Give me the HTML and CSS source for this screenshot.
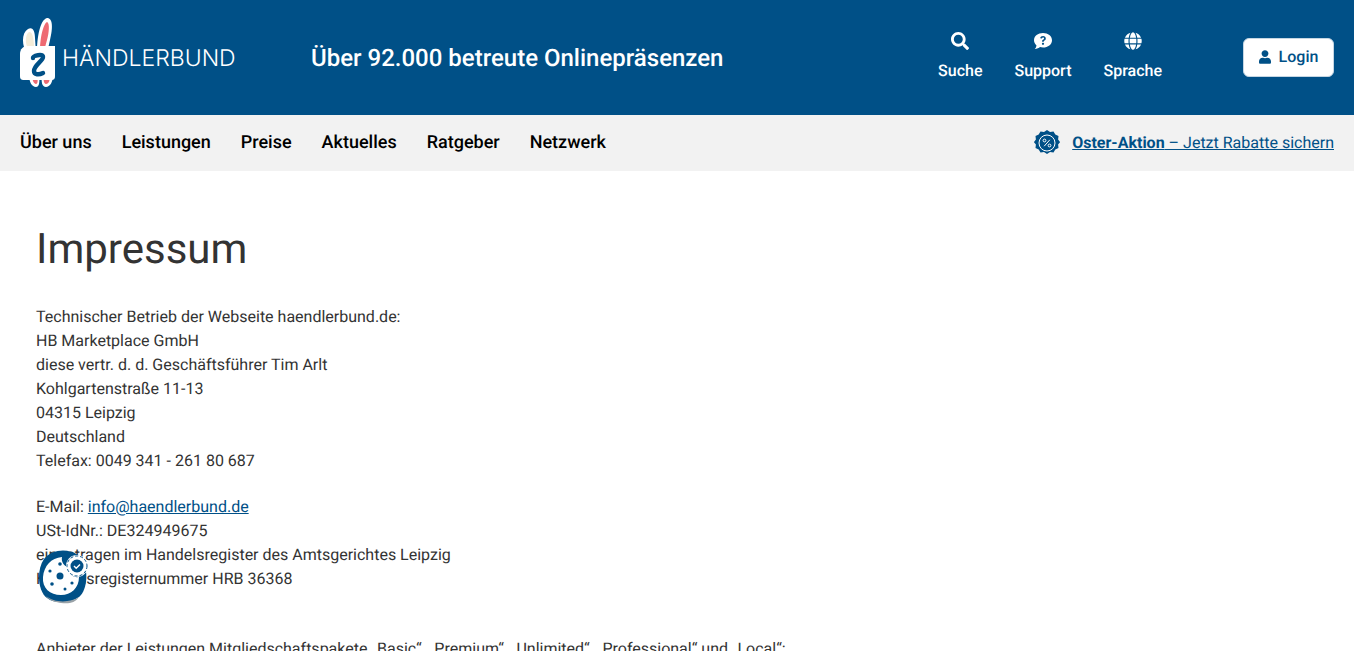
FILE: index.html
```html
<!DOCTYPE html>
<html lang="de">
<head>
<meta charset="utf-8">
<title>Impressum</title>
<link rel="stylesheet" href="styles.css">
</head>
<body>
<header class="top">
  <a class="logo" href="#">
    <svg class="logo-mark" width="36" height="70" viewBox="0 0 36 70">
      <path d="M7 36C2 30 1 16 8 12c5-3 7 3 7 9l1 15z" fill="#fff"/>
      <path d="M8 32C5 26 5 18 9 15c4-1 5 8 5 17z" fill="#f4ecd8"/>
      <path d="M17 36C17 20 20 3 27 1c6 0 6 10 3 22l-3 13z" fill="#fff"/>
      <path d="M20 34C20 22 23 7 27 5c3 1 2 11 0 18l-3 11z" fill="#ee6a72"/>
      <path d="M9 58c0 7 3 12 7 12 3 0 4-4 3-12zM22 58c-1 7 0 12 4 12s7-5 7-12z" fill="#fff"/>
      <path d="M12 58c0 5 2 9 4 9s2-4 1-9zM24 58c-1 5 0 9 2 9 3 0 4-4 4-9z" fill="#ee6a72"/>
      <path d="M8 29h27v30c0 3-1 4-4 4H4c-3 0-4-1-4-4V37c0-5 3-8 8-8z" fill="#fff"/>
      <path d="M13 41c0-2 10-5 10-1 0 4-9 8-9 14 0 4 5 4 9 2" fill="none" stroke="#005087" stroke-width="4.400" stroke-linecap="round"/>
    </svg>
    <span class="logo-text">HÄNDLERBUND</span>
  </a>
  <div class="claim">Über 92.000 betreute Onlinepräsenzen</div>
  <nav class="tools">
    <a class="tool" href="#">
      <svg width="18" height="18" viewBox="0 0 512 512"><path fill="#fff" d="M505 442.700L405.300 343c-4.500-4.500-10.600-7-17-7H372c27.600-35.300 44-79.700 44-128C416 93.100 322.900 0 208 0S0 93.100 0 208s93.100 208 208 208c48.300 0 92.700-16.400 128-44v16.300c0 6.400 2.500 12.500 7 17l99.700 99.700c9.400 9.400 24.600 9.400 33.900 0l28.300-28.300c9.400-9.400 9.400-24.600.1-34zM208 336c-70.700 0-128-57.200-128-128 0-70.700 57.200-128 128-128 70.700 0 128 57.200 128 128 0 70.700-57.200 128-128 128z"/></svg>
      <span>Suche</span>
    </a>
    <a class="tool" href="#">
      <svg width="18" height="18" viewBox="0 0 18 18"><path fill="#fff" fill-rule="evenodd" d="M9 1c5 0 9 3 9 7.300s-4 7.300-9 7.300c-1.100 0-2.100-.2-3-.5C5 16.200 3 17 .8 17c.9-1 1.500-2.200 1.700-3.600C1 12.100 0 10.300 0 8.300 0 4 4 1 9 1zM9.100 4C7.500 4 6.400 4.900 6.200 6.300l1.700.3c.1-.7.500-1.100 1.200-1.100.6 0 1 .4 1 .9 0 .5-.3.800-.9 1.200-.8.500-1.100 1-1.100 1.900v.3h1.700v-.2c0-.4.100-.6.700-1 .8-.5 1.300-1.200 1.300-2.200C11.800 4.900 10.700 4 9.100 4zM9 10.700c-.6 0-1.100.5-1.100 1.100s.5 1.100 1.100 1.100 1.100-.5 1.100-1.100-.5-1.100-1.100-1.100z"/></svg>
      <span>Support</span>
    </a>
    <a class="tool" href="#">
      <svg width="18" height="18" viewBox="0 0 496 512"><path fill="#fff" d="M336.500 160C322 70.700 287.800 8 248 8s-74 62.700-88.500 152h177zM152 256c0 22.200 1.200 43.500 3.300 64h185.300c2.100-20.500 3.300-41.800 3.300-64s-1.200-43.500-3.300-64H155.300c-2.100 20.500-3.300 41.800-3.300 64zm324.700-96c-28.600-67.900-86.500-120.400-158-141.600 24.400 33.800 41.200 84.700 50 141.600h108zM177.200 18.400C105.800 39.600 47.800 92.100 19.300 160h108c8.700-56.900 25.500-107.800 49.900-141.600zM487.400 192H372.700c2.100 21 3.300 42.500 3.300 64s-1.200 43-3.300 64h114.600c5.500-20.500 8.600-41.800 8.600-64s-3.100-43.500-8.500-64zM120 256c0-21.500 1.200-43 3.300-64H8.600C3.200 212.500 0 233.800 0 256s3.200 43.500 8.600 64h114.600c-2-21-3.200-42.500-3.200-64zm39.500 96c14.500 89.300 48.700 152 88.500 152s74-62.700 88.500-152h-177zm159.300 141.600c71.400-21.200 129.400-73.700 158-141.600h-108c-8.800 56.900-25.600 107.800-50 141.600zM19.300 352c28.600 67.900 86.500 120.400 158 141.600-24.400-33.800-41.200-84.700-50-141.600h-108z"/></svg>
      <span>Sprache</span>
    </a>
  </nav>
  <a class="login" href="#">
    <svg width="12" height="14" viewBox="0 0 448 512"><path fill="#005087" d="M224 256c70.700 0 128-57.300 128-128S294.700 0 224 0 96 57.300 96 128s57.300 128 128 128zm89.600 32h-16.700c-22.200 10.200-46.900 16-71.900 16s-49.600-5.800-71.900-16h-16.700C60.200 288 0 348.200 0 422.400V464c0 26.500 21.500 48 48 48h352c26.500 0 48-21.500 48-48v-41.600c0-74.200-60.200-134.400-134.400-134.400z"/></svg>
    <span>Login</span>
  </a>
</header>
<nav class="mainnav">
  <a href="#">Über uns</a>
  <a href="#">Leistungen</a>
  <a href="#">Preise</a>
  <a href="#">Aktuelles</a>
  <a href="#">Ratgeber</a>
  <a href="#">Netzwerk</a>
  <div class="promo">
    <svg width="26" height="26" viewBox="0 0 26 26"><path fill="#005087" d="M13 0l3 2 3.500-.5 1.800 3 3.200 1.500-.4 3.500 2 2.500-2 2.500.4 3.500-3.200 1.500-1.800 3-3.500-.5-3 2-3-2-3.500.5-1.800-3-3.200-1.500.4-3.500-2-2.500 2-2.500-.4-3.500 3.200-1.500 1.800-3L10 2z"/><circle cx="13" cy="13" r="8" fill="none" stroke="#fff" stroke-width="1"/><path d="M15.800 9.800l-5.600 6.400" stroke="#fff" stroke-width="1"/><circle cx="10.500" cy="10.500" r="1.400" fill="none" stroke="#fff"/><circle cx="15.500" cy="15.500" r="1.400" fill="none" stroke="#fff"/></svg>
    <a class="promo-link" href="#"><strong>Oster-Aktion</strong> – Jetzt Rabatte sichern</a>
  </div>
</nav>
<main class="content">
  <h1>Impressum</h1>
  <p>Technischer Betrieb der Webseite haendlerbund.de:<br>HB Marketplace GmbH<br>diese vertr. d. d. Geschäftsführer Tim Arlt<br>Kohlgartenstraße 11-13<br>04315 Leipzig<br>Deutschland<br>Telefax: 0049 341 - 261 80 687</p>
  <p>E-Mail: <a href="#">info@haendlerbund.de</a><br>USt-IdNr.: DE324949675<br>eingetragen im Handelsregister des Amtsgerichtes Leipzig<br>Handelsregisternummer HRB 36368</p>
  <p class="offer">Anbieter der Leistungen Mitgliedschaftspakete „Basic“, „Premium“, „Unlimited“, „Professional“ und „Local“:</p>
</main>
<button class="cookie" aria-label="Cookie-Einstellungen">
  <svg width="52" height="56" viewBox="0 0 52 56">
    <path d="M6 10C14 0 30-1 40 6c10 8 11 30 3 40-7 8-25 10-34 3C0 42-2 22 6 10z" fill="#005087"/>
    <path d="M8 47c8 7 24 7 33 1-4 6-10 7-18 6-7-1-12-3-15-7z" fill="#9aa3a8"/>
    <path d="M5 28C6 17 13 9 24 8c-1 5 2 9 6 10 0 7 5 11 11 10 0 11-8 18-18 18C12 46 4 39 5 28z" fill="#fff"/>
    <circle cx="22" cy="27" r="3.500" fill="#005087"/><circle cx="22" cy="15" r="1.800" fill="#005087"/><circle cx="12" cy="22" r="1.600" fill="#005087"/><circle cx="14" cy="35" r="1.800" fill="#005087"/><circle cx="27" cy="40" r="1.500" fill="#005087"/><circle cx="34" cy="34" r="1.600" fill="#005087"/>
    <circle cx="39" cy="17" r="11" fill="#fff"/>
    <circle cx="39" cy="17" r="10" fill="none" stroke="#005087" stroke-width="1" stroke-dasharray="3 2"/>
    <circle cx="39" cy="17" r="6.500" fill="#005087"/>
    <path d="M36 17l2.200 2.200 3.800-3.800" fill="none" stroke="#fff" stroke-width="1.400"/>
  </svg>
</button>
</body>
</html>
```
FILE: styles.css
```css
* { box-sizing: border-box; }
html, body { margin: 0; padding: 0; }
body { font-family: Roboto, "Liberation Sans", sans-serif; font-size: 16px; line-height: 24px; color: #333; background: #fff; height: 651px; overflow: hidden; text-rendering: geometricPrecision; }
a { color: inherit; text-decoration: none; }
.top { height: 115px; background: #005087; color: #fff; display: flex; align-items: center; padding: 0 20px; width: 1354px; }
.logo { display: flex; align-items: center; width: 291px; flex: none; }
.logo-mark { display: block; flex: none; margin-top: -12px; }
.logo-text { font-family: Inter, sans-serif; font-weight: 300; font-size: 23px; margin-left: 6px; letter-spacing: 0; }
.claim { font-size: 24px; font-weight: 500; flex: 1; }
.tools { display: flex; gap: 32px; margin-right: 81px; margin-bottom: 1px; }
.tool { display: flex; flex-direction: column; align-items: center; gap: 9px; font-weight: 500; }
.tool svg { display: block; }
.login { display: flex; align-items: center; gap: 8px; width: 91px; height: 39px; margin-bottom: 1px; justify-content: center; background: #fff; border: 1px solid #c5d6e3; border-radius: 6px; color: #005087; font-weight: 500; }
.mainnav { height: 56px; background: #f2f2f2; display: flex; align-items: center; gap: 30px; padding: 0 20px; width: 1354px; color: #000; font-size: 18px; font-weight: 500; }
.promo { margin-left: auto; display: flex; align-items: center; gap: 12px; font-size: 16px; font-weight: 400; color: #005087; }
.promo-link { text-decoration: underline; }
.promo-link strong { font-weight: 700; }
.content { padding: 49px 36px 0; width: 1354px; }
h1 { margin: 0 0 25px; font-size: 42px; line-height: 60px; font-weight: 400; color: #333; }
.content p { margin: 0 0 22px; }
.content p a { color: #005087; text-decoration: underline; }
.content .offer { margin-top: 46px; }
.cookie { position: fixed; left: 38px; top: 549px; width: 52px; height: 56px; padding: 0; border: 0; background: none; }
.cookie svg { display: block; }
```
